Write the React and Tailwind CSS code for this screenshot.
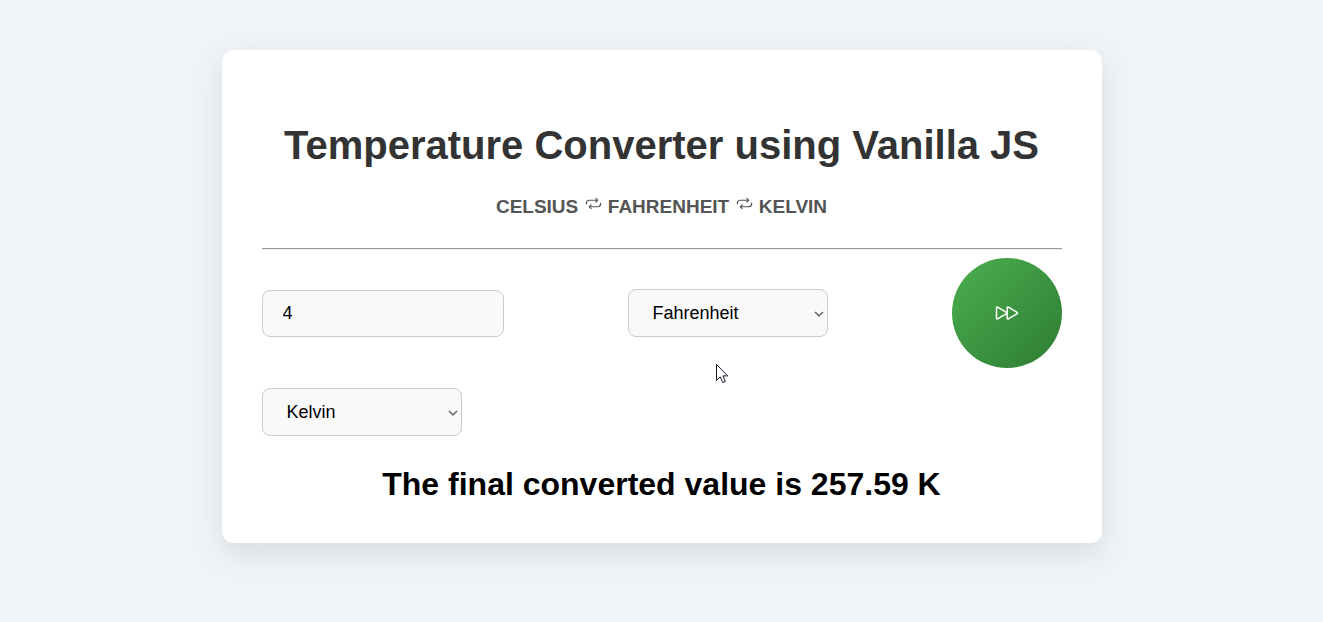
import { useState } from "react";
import { IoRepeatOutline, IoPlayForwardOutline } from "react-icons/io5";

const UNITS = ["Celsius", "Fahrenheit", "Kelvin"];
const SYMBOLS = { Celsius: "°C", Fahrenheit: "°F", Kelvin: "K" };

function convert(value, from, to) {
  let celsius = value;
  if (from === "Fahrenheit") celsius = ((value - 32) * 5) / 9;
  if (from === "Kelvin") celsius = value - 273.15;
  if (to === "Fahrenheit") return (celsius * 9) / 5 + 32;
  if (to === "Kelvin") return celsius + 273.15;
  return celsius;
}

function UnitSelect({ label, value, onChange }) {
  return (
    <div className="relative w-[200px]">
      <select
        aria-label={label}
        value={value}
        onChange={(e) => onChange(e.target.value)}
        className="h-12 w-full appearance-none rounded-lg border border-[#cccccc] bg-[#f9f9f9] px-6 text-lg text-black"
      >
        {UNITS.map((unit) => (
          <option key={unit}>{unit}</option>
        ))}
      </select>
      <svg
        viewBox="0 0 10 6"
        className="pointer-events-none absolute top-[22px] right-1 h-1.5 w-2.5"
        fill="none"
        stroke="#6b6b6b"
        strokeWidth="1.6"
        aria-hidden="true"
      >
        <path d="M1 1L5 4.8L9 1" />
      </svg>
    </div>
  );
}

export default function App() {
  const [value, setValue] = useState("4");
  const [from, setFrom] = useState("Fahrenheit");
  const [to, setTo] = useState("Kelvin");
  const [result, setResult] = useState("257.59 K");

  const handleSubmit = (e) => {
    e.preventDefault();
    setResult(`${convert(Number(value), from, to).toFixed(2)} ${SYMBOLS[to]}`);
  };

  return (
    <div className="min-h-screen bg-[#f0f4f8] px-4 py-[50px] font-['Liberation_Sans',Arial,sans-serif]">
      <main className="mx-auto max-w-[880px] rounded-xl bg-white p-10 pt-[72px] shadow-[0_10px_30px_rgba(0,0,0,0.1)]">
        <h1 className="text-center text-[40px] leading-[46px] font-bold text-[#333333]">
          Temperature Converter using Vanilla JS
        </h1>
        <h2 className="mt-[26px] text-center text-[19px] leading-[22px] font-bold text-[#555555]">
          CELSIUS <IoRepeatOutline className="inline align-baseline" /> FAHRENHEIT{" "}
          <IoRepeatOutline className="inline align-baseline" /> KELVIN
        </h2>
        <hr className="mt-[30px] mb-2 border-t border-b border-t-[#9a9a9a] border-b-[#eeeeee]" />
        <form onSubmit={handleSubmit} className="flex flex-wrap items-center justify-between gap-5">
          <input
            type="number"
            aria-label="Temperature"
            value={value}
            onChange={(e) => setValue(e.target.value)}
            className="h-[47px] w-[242px] rounded-lg border border-[#cccccc] bg-[#f9f9f9] px-5 text-lg text-black"
          />
          <UnitSelect label="Convert from" value={from} onChange={setFrom} />
          <button
            type="submit"
            aria-label="Convert"
            className="flex size-[110px] items-center justify-center rounded-full bg-linear-135 from-[#4caf50] to-[#2e7d32] text-white"
          >
            <IoPlayForwardOutline className="size-6" />
          </button>
          <UnitSelect label="Convert to" value={to} onChange={setTo} />
        </form>
        <p className="mt-[30px] text-center text-[32px] leading-[37px] font-bold text-black">
          The final converted value is {result}
        </p>
      </main>
      <svg
        viewBox="0 0 13 20"
        className="pointer-events-none absolute top-[364px] left-[716px] h-5 w-[13px]"
        aria-hidden="true"
      >
        <path
          d="M.5 .5V16.5L4.2 12.9L6.8 18.6L9.4 17.4L6.9 11.9H11.7Z"
          fill="white"
          stroke="#16162a"
          strokeWidth="1"
        />
      </svg>
    </div>
  );
}
